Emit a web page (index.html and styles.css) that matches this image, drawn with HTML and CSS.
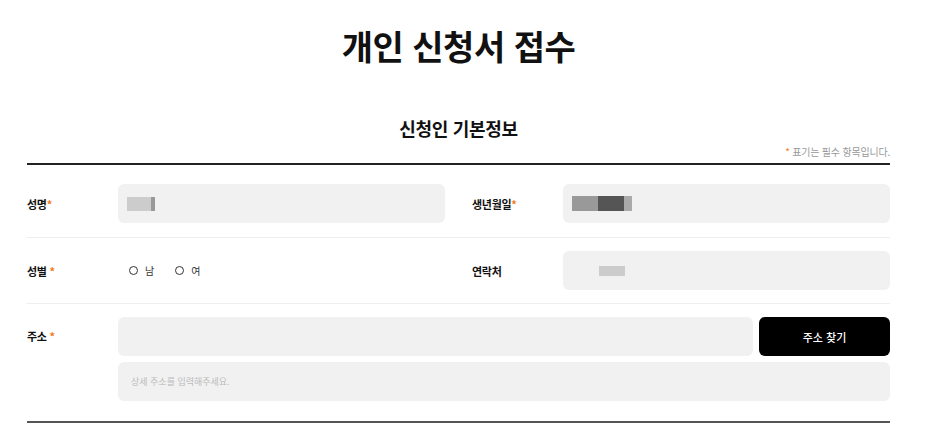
FILE: index.html
```html
<!DOCTYPE html>
<html lang="ko">
<head>
    <meta charset="UTF-8">
    <meta name="viewport" content="width=device-width, initial-scale=1.0">
    <title>개인 신청서 접수</title>
    <link rel="stylesheet" href="styles.css">
</head>
<body>
    <div class="page">
        <h1>개인 신청서 접수</h1>
        <div class="container">
            <h2>신청인 기본정보</h2>
            <p class="note"><span class="req">*</span> 표기는 필수 항목입니다.</p>
            <form class="form">
                <div class="row first">
                    <div class="field">
                        <label>성명<span class="req">*</span></label>
                        <div class="box">
                            <span class="mask m-light" style="width:24px"></span><span class="mask m-mid" style="width:4px"></span>
                        </div>
                    </div>
                    <div class="field">
                        <label>생년월일<span class="req">*</span></label>
                        <div class="box">
                            <span class="mask m-mid tall" style="width:26px"></span><span class="mask m-dark tall" style="width:26px"></span><span class="mask m-soft tall" style="width:8px"></span>
                        </div>
                    </div>
                </div>
                <div class="row">
                    <div class="field">
                        <label>성별 <span class="req">*</span></label>
                        <div class="radios">
                            <span class="radio"><i></i>남</span>
                            <span class="radio"><i></i>여</span>
                        </div>
                    </div>
                    <div class="field">
                        <label>연락처</label>
                        <div class="box">
                            <span class="mask m-light short indent" style="width:26px"></span>
                        </div>
                    </div>
                </div>
                <div class="row address">
                    <label>주소 <span class="req">*</span></label>
                    <div class="addr-inputs">
                        <div class="addr-line">
                            <input type="text" class="box">
                            <button type="button">주소 찾기</button>
                        </div>
                        <input type="text" class="box" placeholder="상세 주소를 입력해주세요.">
                    </div>
                </div>
            </form>
        </div>
    </div>
</body>
</html>
```

FILE: styles.css
```css
body {
    font-family: "Noto Sans CJK KR", "Noto Sans", sans-serif;
    margin: 0;
    padding: 0;
    background-color: white;
    color: #111;
}
.page {
    width: 917px;
}
h1 {
    margin: 23px 0 0;
    font-size: 34px;
    line-height: 46px;
    font-weight: bold;
    text-align: center;
    letter-spacing: -0.5px;
}
.container {
    width: 863px;
    margin: 0 auto;
}
h2 {
    margin: 46px 0 0;
    font-size: 18px;
    line-height: 26px;
    font-weight: bold;
    text-align: center;
    letter-spacing: -0.3px;
}
.note {
    margin: 4px 0 0;
    font-size: 10px;
    line-height: 14px;
    color: #999;
    text-align: right;
    padding-bottom: 4px;
    letter-spacing: -0.2px;
}
.req {
    color: #f47a20;
}
.form {
    border-top: 2px solid #222;
    border-bottom: 2px solid #555;
}
.row {
    display: grid;
    grid-template-columns: 1fr 1fr;
    gap: 27px;
    padding: 13px 0;
    border-bottom: 1px solid #eee;
}
.row.first {
    padding: 19px 0 14px;
}
.field {
    display: grid;
    grid-template-columns: 91px 1fr;
    align-items: center;
}
label {
    font-size: 11px;
    font-weight: bold;
    letter-spacing: -0.3px;
}
.box {
    display: flex;
    align-items: center;
    height: 39px;
    box-sizing: border-box;
    padding: 0 9px;
    background-color: #f1f1f1;
    border: none;
    border-radius: 6px;
    font-family: inherit;
    font-size: 9px;
    outline: none;
}
.box::placeholder {
    color: #bbb;
}
.mask {
    display: block;
    height: 14px;
}
.mask.tall {
    height: 15px;
}
.mask.short {
    height: 10px;
}
.mask.indent {
    margin-left: 27px;
}
.m-light { background-color: #ccc; }
.m-mid { background-color: #999; }
.m-dark { background-color: #555; }
.m-soft { background-color: #aaa; }
.radios {
    display: flex;
    align-items: center;
    gap: 21px;
    height: 39px;
    padding-left: 11px;
}
.radio {
    display: flex;
    align-items: center;
    gap: 7px;
    font-size: 10px;
    color: #333;
}
.radio i {
    width: 9px;
    height: 9px;
    box-sizing: border-box;
    border: 1.5px solid #333;
    border-radius: 50%;
}
.address {
    grid-template-columns: 91px 1fr;
    gap: 0;
    padding: 13px 0 20px;
    border-bottom: none;
    align-items: start;
}
.address label {
    line-height: 39px;
}
.addr-inputs {
    display: flex;
    flex-direction: column;
    gap: 6px;
}
.addr-line {
    display: flex;
    gap: 6px;
}
.addr-line .box {
    flex: 1;
}
.addr-inputs > .box {
    padding-left: 13px;
}
button {
    width: 131px;
    height: 39px;
    background-color: black;
    color: white;
    border: none;
    border-radius: 6px;
    font-family: inherit;
    font-size: 11px;
    font-weight: 500;
    cursor: pointer;
}
```
